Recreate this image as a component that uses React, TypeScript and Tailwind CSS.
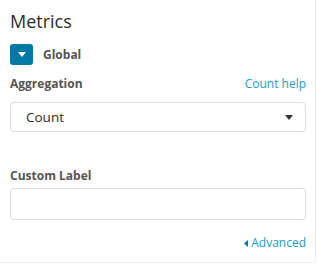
const App = () => {
  return (
    <div className="w-[317px] h-[264px] bg-white" style={{ fontFamily: '"Open Sans", sans-serif' }}>
      <div className="w-[316px] h-[263px] bg-white border-b border-r border-[#ededed] rounded-br-[4px] pl-[10px] pr-[9px] pt-[8px]">
        {/* Title */}
        <h2 className="text-[18px] leading-[26px] text-[#2d2d2d]">Metrics</h2>

        {/* Global toggle */}
        <div className="flex items-center mt-[10px]">
          <button className="w-[23px] h-[21px] bg-[#0079a5] rounded-[3px] flex items-center justify-center">
            <svg width="8" height="5" viewBox="0 0 8 5">
              <path d="M0 0 L8 0 L4 5 Z" fill="#fff" />
            </svg>
          </button>
          <span className="ml-[10px] text-[12px] font-bold text-[#555]">Global</span>
        </div>

        {/* Aggregation */}
        <div className="flex items-center justify-between mt-[10px]">
          <label className="text-[12px] font-bold text-[#555] leading-[18px]">Aggregation</label>
          <a className="text-[12px] text-[#1d9ccc] leading-[18px]">Count help</a>
        </div>
        <div className="mt-[9px] h-[30px] border border-[#ddd] rounded-[4px] flex items-center justify-between pl-[15px] pr-[12px]">
          <span className="text-[13.5px] text-[#2d2d2d]">Count</span>
          <svg width="8" height="5" viewBox="0 0 8 5">
            <path d="M0 0 L8 0 L4 5 Z" fill="#333" />
          </svg>
        </div>

        {/* Custom label */}
        <label className="block mt-[35px] text-[12px] font-bold text-[#555] leading-[18px]">Custom Label</label>
        <div className="mt-[3px] h-[32px] border border-[#ddd] rounded-[4px]" />

        {/* Advanced */}
        <div className="flex justify-end items-center mt-[14px]">
          <svg width="4" height="7" viewBox="0 0 4 7" className="mr-[3px]">
            <path d="M4 0 L4 7 L0 3.5 Z" fill="#0079a5" />
          </svg>
          <a className="text-[12px] text-[#1d9ccc] leading-[18px]">Advanced</a>
        </div>
      </div>
    </div>
  );
};

export default App;
